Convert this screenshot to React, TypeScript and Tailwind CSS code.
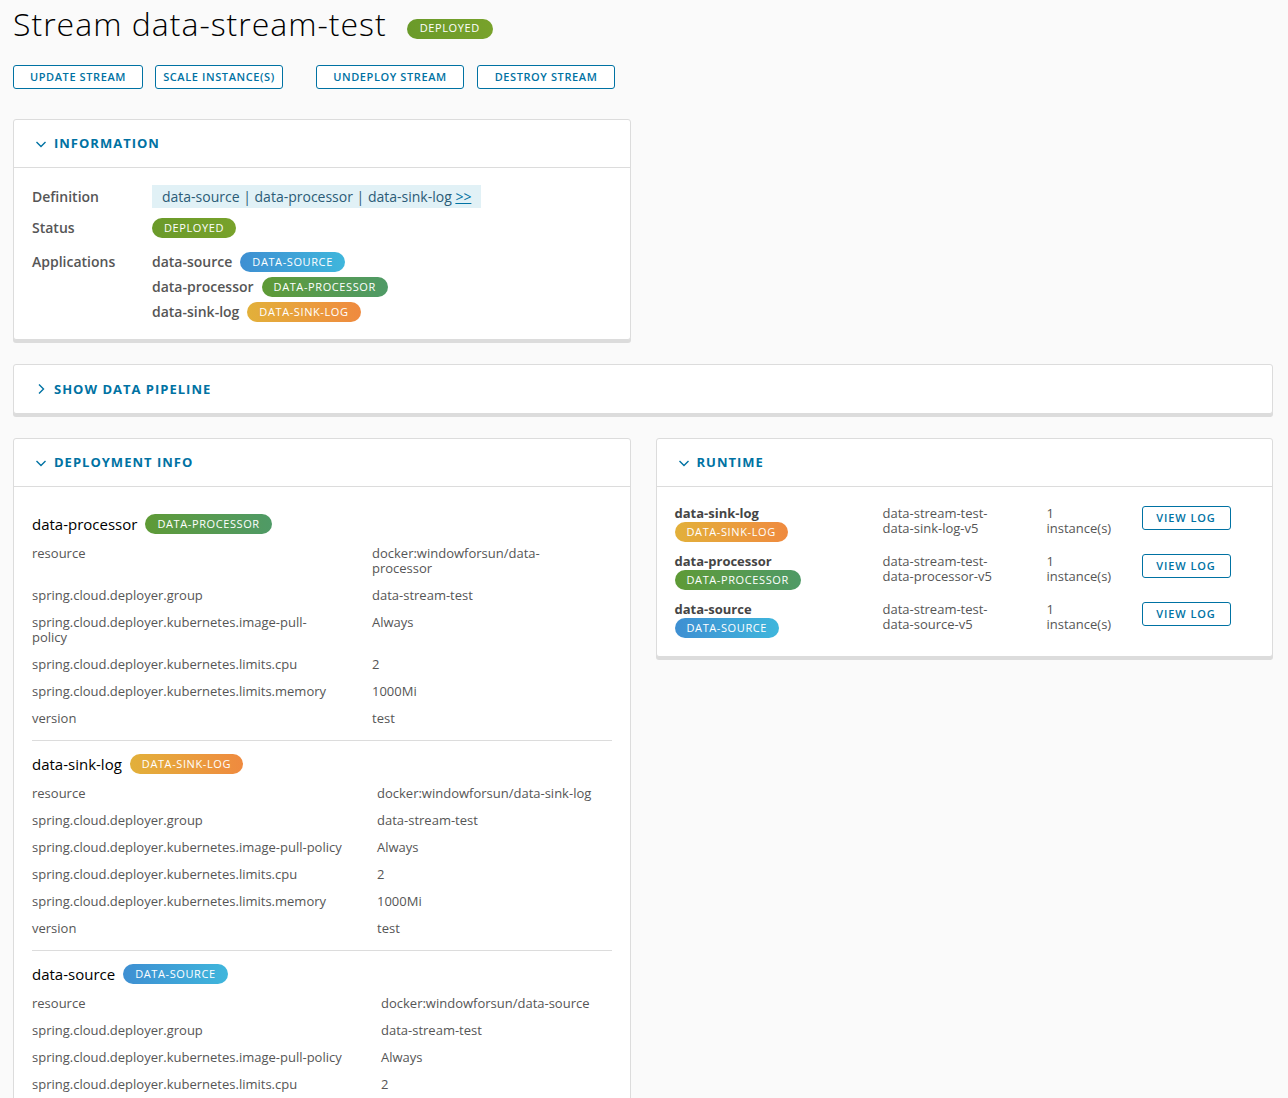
import React from 'react';

const FONT = { fontFamily: '"Open Sans", Lato, sans-serif' };

const badgeColors: Record<string, string> = {
  source: 'bg-linear-to-r from-[#3e8fd2] to-[#3fb6dc]',
  processor: 'bg-linear-to-r from-[#5e9a35] to-[#4f9a66]',
  sink: 'bg-linear-to-r from-[#e2b03a] to-[#ef8a3f]',
  deployed: 'bg-linear-to-r from-[#6a9a2a] to-[#78a22b]',
};

function Badge({ kind, children, className = '' }: { kind: string; children: React.ReactNode; className?: string }) {
  return (
    <span
      className={`inline-flex items-center h-[20px] px-[12px] rounded-full text-white text-[11px] font-medium tracking-[0.6px] ${badgeColors[kind]} ${className}`}
    >
      {children}
    </span>
  );
}

function Chevron({ open }: { open: boolean }) {
  return (
    <svg width="12" height="12" viewBox="0 0 12 12" className="text-[#0072a3]">
      {open ? (
        <polyline points="1.5,4 6,8.5 10.5,4" fill="none" stroke="currentColor" strokeWidth="1.4" />
      ) : (
        <polyline points="4,1.5 8.5,6 4,10.5" fill="none" stroke="currentColor" strokeWidth="1.4" />
      )}
    </svg>
  );
}

function Card({ title, open = true, children }: { title: string; open?: boolean; children?: React.ReactNode }) {
  return (
    <div className="bg-white border border-[#dcdcdc] rounded-[3px] shadow-[0_3px_0_#dcdcdc]">
      <div className={`h-[48px] flex items-center gap-[7px] pl-[21px] ${open ? 'border-b border-[#dcdcdc]' : ''}`}>
        <Chevron open={open} />
        <span className="text-[13px] font-bold tracking-[1px] text-[#0072a3]">{title}</span>
      </div>
      {children}
    </div>
  );
}

const buttons = [
  { label: 'UPDATE STREAM', cls: 'w-[130px]' },
  { label: 'SCALE INSTANCE(S)', cls: 'w-[128px] ml-[12px]' },
  { label: 'UNDEPLOY STREAM', cls: 'w-[148px] ml-[33px]' },
  { label: 'DESTROY STREAM', cls: 'w-[138px] ml-[13px]' },
];

type Row = { k: React.ReactNode; v: React.ReactNode };

const sections: { name: string; kind: string; badge: string; col: string; rows: Row[] }[] = [
  {
    name: 'data-processor',
    kind: 'processor',
    badge: 'DATA-PROCESSOR',
    col: 'grid-cols-[340px_1fr]',
    rows: [
      { k: 'resource', v: <>docker:windowforsun/data-<br />processor</> },
      { k: 'spring.cloud.deployer.group', v: 'data-stream-test' },
      { k: <>spring.cloud.deployer.kubernetes.image-pull-<br />policy</>, v: 'Always' },
      { k: 'spring.cloud.deployer.kubernetes.limits.cpu', v: '2' },
      { k: 'spring.cloud.deployer.kubernetes.limits.memory', v: '1000Mi' },
      { k: 'version', v: 'test' },
    ],
  },
  {
    name: 'data-sink-log',
    kind: 'sink',
    badge: 'DATA-SINK-LOG',
    col: 'grid-cols-[345px_1fr]',
    rows: [
      { k: 'resource', v: 'docker:windowforsun/data-sink-log' },
      { k: 'spring.cloud.deployer.group', v: 'data-stream-test' },
      { k: 'spring.cloud.deployer.kubernetes.image-pull-policy', v: 'Always' },
      { k: 'spring.cloud.deployer.kubernetes.limits.cpu', v: '2' },
      { k: 'spring.cloud.deployer.kubernetes.limits.memory', v: '1000Mi' },
      { k: 'version', v: 'test' },
    ],
  },
  {
    name: 'data-source',
    kind: 'source',
    badge: 'DATA-SOURCE',
    col: 'grid-cols-[349px_1fr]',
    rows: [
      { k: 'resource', v: 'docker:windowforsun/data-source' },
      { k: 'spring.cloud.deployer.group', v: 'data-stream-test' },
      { k: 'spring.cloud.deployer.kubernetes.image-pull-policy', v: 'Always' },
      { k: 'spring.cloud.deployer.kubernetes.limits.cpu', v: '2' },
      { k: 'spring.cloud.deployer.kubernetes.limits.memory', v: '1000Mi' },
      { k: 'version', v: 'test' },
    ],
  },
];

const runtime = [
  { name: 'data-sink-log', kind: 'sink', badge: 'DATA-SINK-LOG', id: 'data-sink-log-v5' },
  { name: 'data-processor', kind: 'processor', badge: 'DATA-PROCESSOR', id: 'data-processor-v5' },
  { name: 'data-source', kind: 'source', badge: 'DATA-SOURCE', id: 'data-source-v5' },
];

export default function App() {
  return (
    <div className="min-h-screen bg-[#fafafa] pl-[13px] pr-[15px] pt-[4px] pb-[40px] text-[#565656]" style={FONT}>
      <div className="flex items-center">
        <h1 className="text-[32px] leading-[40px] font-light tracking-[1px] text-black">Stream data-stream-test</h1>
        <Badge kind="deployed" className="ml-[20px] mt-[9px] px-[13px]">DEPLOYED</Badge>
      </div>

      <div className="flex mt-[21px]">
        {buttons.map(b => (
          <button
            key={b.label}
            className={`h-[24px] flex items-center justify-center border border-[#0072a3] rounded-[3px] bg-white text-[#0072a3] text-[11px] font-semibold tracking-[0.6px] ${b.cls}`}
          >
            {b.label}
          </button>
        ))}
      </div>

      <div className="grid grid-cols-2 gap-x-[25px] mt-[30px]">
        <Card title="INFORMATION">
          <div className="px-[18px] pt-[17px] pb-[17px] text-[14px]">
            <div className="grid grid-cols-[120px_1fr] items-center gap-y-[8px]">
              <span className="font-semibold">Definition</span>
              <div>
                <span className="inline-block bg-[#e1f1f6] text-[#2b5c77] px-[10px] h-[23px] leading-[23px]">
                  data-source | data-processor | data-sink-log <span className="underline text-[#0072a3]">&gt;&gt;</span>
                </span>
              </div>
              <span className="font-semibold">Status</span>
              <div><Badge kind="deployed">DEPLOYED</Badge></div>
              <span className="font-semibold self-start mt-[5px]">Applications</span>
              <div className="flex flex-col gap-[4px] mt-[5px]">
                <div className="flex items-center gap-[8px]"><span className="font-semibold">data-source</span><Badge kind="source">DATA-SOURCE</Badge></div>
                <div className="flex items-center gap-[8px]"><span className="font-semibold">data-processor</span><Badge kind="processor">DATA-PROCESSOR</Badge></div>
                <div className="flex items-center gap-[8px]"><span className="font-semibold">data-sink-log</span><Badge kind="sink">DATA-SINK-LOG</Badge></div>
              </div>
            </div>
          </div>
        </Card>
        <div />
      </div>

      <div className="mt-[24px]">
        <Card title="SHOW DATA PIPELINE" open={false} />
      </div>

      <div className="grid grid-cols-2 gap-x-[25px] mt-[24px] items-start">
        <Card title="DEPLOYMENT INFO">
          <div className="px-[18px] pt-[26px]">
            {sections.map((s, i) => (
              <div key={s.name} className={i > 0 ? 'border-t border-[#dcdcdc] pt-[12px]' : ''}>
                <div className="flex items-center gap-[8px] h-[22px]">
                  <span className="text-[15px] text-black">{s.name}</span>
                  <Badge kind={s.kind}>{s.badge}</Badge>
                </div>
                <div className={`grid ${s.col} text-[13px] leading-[15px] pt-[5px] pb-[8px]`}>
                  {s.rows.map((r, j) => (
                    <React.Fragment key={j}>
                      <div className="py-[6px]">{r.k}</div>
                      <div className="py-[6px]">{r.v}</div>
                    </React.Fragment>
                  ))}
                </div>
              </div>
            ))}
          </div>
        </Card>

        <Card title="RUNTIME">
          <div className="px-[18px] pt-[19px] pb-[18px] flex flex-col gap-[12px]">
            {runtime.map(r => (
              <div key={r.name} className="grid grid-cols-[208px_164px_95px_auto] text-[13px] leading-[14px]">
                <div className="flex flex-col items-start gap-[2px]">
                  <span className="font-bold text-[#454545]">{r.name}</span>
                  <Badge kind={r.kind}>{r.badge}</Badge>
                </div>
                <div className="leading-[15px]">data-stream-test-<br />{r.id}</div>
                <div className="leading-[15px]">1<br />instance(s)</div>
                <div>
                  <button className="h-[24px] w-[89px] flex items-center justify-center border border-[#0072a3] rounded-[3px] bg-white text-[#0072a3] text-[11px] font-semibold tracking-[0.9px]">
                    VIEW LOG
                  </button>
                </div>
              </div>
            ))}
          </div>
        </Card>
      </div>
    </div>
  );
}
